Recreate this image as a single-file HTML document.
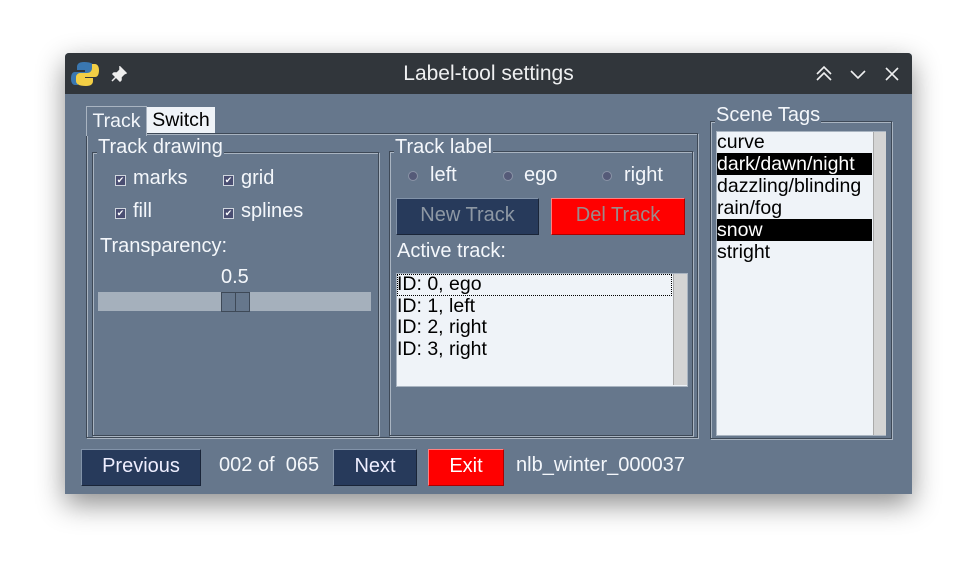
<!DOCTYPE html><html><head><style>
body{margin:0;width:977px;height:572px;background:#fff;position:relative;overflow:hidden;font-family:"Liberation Sans",sans-serif;font-size:20px}
.a{position:absolute}
#win{left:65px;top:53px;width:847px;height:441px;background:#66778c;box-shadow:0 10px 28px rgba(0,0,0,.45);border-radius:4px 4px 0 0;overflow:hidden}
#tb{left:0;top:0;width:847px;height:41px;background:#31363b;color:#eff0f1}
.fr{border:1px solid #3e4957;box-shadow:inset 1px 1px 0 #a9b4c1,1px 1px 0 #a9b4c1}
.lab{background:#66778c;color:#f4f7fb;padding:0 1px;line-height:20px}
.w{color:#f4f7fb}
.cb{width:9px;height:9px;background:#4a4e72;border:1px solid #d0d6de;color:#fff;font-size:9px;line-height:9px;text-align:center}
.rd{width:8px;height:8px;border-radius:50%;background:#555a78;border:1px solid #8a93a6}
.btn{text-align:center;line-height:33px;border:1px solid #8293a9;box-sizing:border-box}
.lb{background:#eff3f8;color:#000;line-height:22px;font-size:19.5px}
.sb{background:#d4d4d4;border-left:1px solid #aaa}
</style></head><body>
<div id="win" class="a">
<div id="tb" class="a">
<svg class="a" style="left:6px;top:7px" width="28" height="28" viewBox="0 0 28 28"><path d="M13 2c-5 0-7 2-7 5v3h8v2H4c-3 0-4 3-4 7s2 6 4 6h3v-4c0-3 2-5 5-5h7c2 0 4-2 4-4V7c0-3-3-5-10-5z" fill="#3a77b0"/><path d="M15 26c5 0 7-2 7-5v-3h-8v-1h10c3 0 4-3 4-7s-2-6-4-6h-3v4c0 3-2 5-5 5H9c-2 0-4 2-4 4v4c0 3 3 5 10 5z" fill="#f3cf45"/></svg>
<svg class="a" style="left:46px;top:13px" width="16" height="16" viewBox="0 0 16 16"><path d="M9 1l6 6-2 1-3 3 0 3-1 1-7-7 1-1 3 0 3-3z M5 11l-4 4" stroke="#eee" stroke-width="1.5" fill="#eee"/></svg>
<div class="a" style="left:0;width:847px;top:9px;text-align:center;font-size:21px">Label-tool settings</div>
<svg class="a" style="left:750px;top:12px" width="90" height="18" viewBox="0 0 90 18" fill="none" stroke="#eff0f1" stroke-width="1.6"><path d="M2 9l7-7 7 7M2 15l7-7 7 7M36 6l7 7 7-7M71 3l12 12M83 3L71 15"/></svg>
</div>
<div class="a fr" style="left:21px;top:80px;width:610px;height:303px"></div>
<div class="a" style="left:21px;top:53px;width:59px;height:29px;border:1px solid #a9b4c1;border-bottom:none;background:#66778c;color:#f4f7fb;line-height:28px;text-align:center;font-size:19.5px">Track</div>
<div class="a" style="left:82px;top:54px;width:68px;height:26px;background:#eff3f8;line-height:26px;text-align:center;font-size:19.5px">Switch</div>
<div class="a fr" style="left:27px;top:99px;width:285px;height:282px"></div>
<div class="a lab" style="left:32px;top:84px">Track drawing</div>
<div class="a cb" style="left:50px;top:122px">✔</div><div class="a w" style="left:68px;top:114px">marks</div>
<div class="a cb" style="left:158px;top:122px">✔</div><div class="a w" style="left:176px;top:114px">grid</div>
<div class="a cb" style="left:50px;top:155px">✔</div><div class="a w" style="left:68px;top:147px">fill</div>
<div class="a cb" style="left:158px;top:155px">✔</div><div class="a w" style="left:176px;top:147px">splines</div>
<div class="a w" style="left:35px;top:182px">Transparency:</div>
<div class="a w" style="left:156px;top:213px">0.5</div>
<div class="a" style="left:33px;top:239px;width:273px;height:19px;background:#a5b0bc"></div>
<div class="a" style="left:156px;top:239px;width:13px;height:18px;background:#66778c;border:1px solid #3e4957"></div>
<div class="a" style="left:170px;top:239px;width:13px;height:18px;background:#66778c;border:1px solid #3e4957"></div>
<div class="a fr" style="left:324px;top:98px;width:302px;height:283px"></div>
<div class="a lab" style="left:329px;top:84px">Track label</div>
<div class="a rd" style="left:343px;top:118px"></div><div class="a w" style="left:365px;top:111px">left</div>
<div class="a rd" style="left:438px;top:118px"></div><div class="a w" style="left:459px;top:111px">ego</div>
<div class="a rd" style="left:537px;top:118px"></div><div class="a w" style="left:559px;top:111px">right</div>
<div class="a btn" style="left:331px;top:145px;width:143px;height:37px;background:#273a5b;color:#8e98a4;border-color:#8293a9 #1a2538 #1a2538 #8293a9">New Track</div>
<div class="a btn" style="left:486px;top:145px;width:134px;height:37px;background:#f00;color:#9a8b8b;border-color:#ff8080 #a00 #a00 #ff8080">Del Track</div>
<div class="a w" style="left:332px;top:187px">Active track:</div>
<div class="a lb" style="left:331px;top:220px;width:290px;height:112px;border:1px solid #a9b4c1;line-height:21.5px">
<div style="outline:1px dotted #000;outline-offset:-1px;width:275px">ID: 0, ego</div><div>ID: 1, left</div><div>ID: 2, right</div><div>ID: 3, right</div>
<div class="a sb" style="left:276px;top:0;width:13px;height:111px"></div></div>
<div class="a fr" style="left:645px;top:68px;width:180px;height:316px"></div>
<div class="a lab" style="left:650px;top:52px">Scene Tags</div>
<div class="a lb" style="left:651px;top:78px;width:168px;height:303px;border:1px solid #a9b4c1;line-height:22px">
<div style="margin-top:-1px">curve</div><div style="background:#000;color:#fff;width:155px">dark/dawn/night</div><div>dazzling/blinding</div><div>rain/fog</div><div style="background:#000;color:#fff;width:155px">snow</div><div>stright</div>
<div class="a sb" style="left:156px;top:0;width:12px;height:303px"></div></div>
<div class="a btn" style="left:16px;top:396px;width:120px;height:37px;background:#273a5b;color:#eef;border-color:#8293a9 #1a2538 #1a2538 #8293a9">Previous</div>
<div class="a w" style="left:154px;top:401px">002 of&nbsp; 065</div>
<div class="a btn" style="left:268px;top:396px;width:84px;height:37px;background:#273a5b;color:#eef;border-color:#8293a9 #1a2538 #1a2538 #8293a9">Next</div>
<div class="a btn" style="left:363px;top:396px;width:76px;height:37px;background:#f00;color:#fff;border-color:#ff8080 #a00 #a00 #ff8080">Exit</div>
<div class="a w" style="left:451px;top:401px">nlb_winter_000037</div>
</div>
</body></html>
